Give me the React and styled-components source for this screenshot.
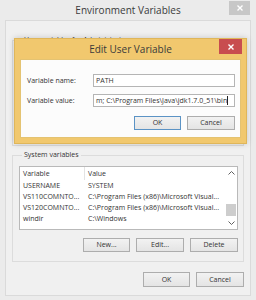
import React from 'react';
import styled, { createGlobalStyle } from 'styled-components';

const Global = createGlobalStyle`
  html, body {
    margin: 0;
    padding: 0;
    background: #ebebeb;
  }
  body {
    font-family: 'Open Sans', 'Noto Sans', sans-serif;
    color: #333;
  }
`;

const Window = styled.div`
  position: relative;
  width: 256px;
  height: 300px;
  box-sizing: border-box;
  background: #ebebeb;
  display: flex;
  flex-direction: column;
  overflow: hidden;
`;

const TitleBar = styled.div`
  display: grid;
  grid-template-columns: 1fr auto 1fr;
  align-items: start;
  height: 20px;
  flex-shrink: 0;
`;

const Title = styled.div`
  grid-column: 2;
  font-size: 10px;
  line-height: 21px;
  color: #3a3a3a;
  white-space: nowrap;
`;

const CloseButton = styled.div`
  grid-column: 3;
  justify-self: end;
  width: ${(p) => p.$w}px;
  height: ${(p) => p.$h}px;
  margin: ${(p) => p.$top}px ${(p) => p.$right}px 0 0;
  background: ${(p) => p.$bg};
  display: flex;
  align-items: center;
  justify-content: center;
`;

const Client = styled.div`
  flex: 1;
  margin: 0 5px 4px 5px;
  padding: 14px 6px 0 6px;
  background: #f0f0f0;
  border: 1px solid #dadada;
  display: flex;
  flex-direction: column;
`;

const Group = styled.fieldset`
  margin: ${(p) => p.$top}px 0 0 0;
  padding: 6px 5px 9px 6px;
  border: 1px solid #dcdcdc;
  min-width: 0;
  height: ${(p) => (p.$h ? `${p.$h}px` : 'auto')};
  box-sizing: border-box;
  display: flex;
  flex-direction: column;
`;

const Legend = styled.legend`
  font-size: 7px;
  line-height: 10px;
  padding: 0 2px;
  margin-left: 3px;
  color: #333;
`;

const ListBox = styled.div`
  height: 64px;
  box-sizing: border-box;
  border: 1px solid #b9b9b9;
  background: #fff;
  display: flex;
  overflow: hidden;
`;

const Table = styled.div`
  flex: 1;
  display: flex;
  flex-direction: column;
  min-width: 0;
`;

const Row = styled.div`
  display: grid;
  grid-template-columns: 65px 1fr;
  height: ${(p) => (p.$head ? 13 : 11)}px;
  line-height: ${(p) => (p.$head ? 13 : 11)}px;
  font-size: 7px;
  color: #333;
  flex-shrink: 0;
`;

const Cell = styled.div`
  padding-left: 3px;
  white-space: nowrap;
  overflow: hidden;
  border-right: ${(p) => (p.$divider ? '1px solid #e3e3e3' : 'none')};
`;

const ScrollBar = styled.div`
  width: 12px;
  display: flex;
  flex-direction: column;
  background: #fff;
`;

const Arrow = styled.div`
  height: 12px;
  display: flex;
  align-items: center;
  justify-content: center;
`;

const Track = styled.div`
  flex: 1;
  display: flex;
  flex-direction: column;
  justify-content: flex-end;
`;

const Thumb = styled.div`
  height: 12px;
  margin: 0 1px 1px 1px;
  background: #cdcdcd;
`;

const ButtonRow = styled.div`
  display: flex;
  justify-content: flex-end;
  gap: 6px;
  margin-top: ${(p) => p.$top}px;
  width: ${(p) => (p.$w ? `${p.$w}px` : 'auto')};
`;

const Button = styled.div`
  box-sizing: border-box;
  width: ${(p) => p.$w}px;
  height: ${(p) => p.$h}px;
  border: 1px solid ${(p) => (p.$default ? '#5b93c5' : '#adadad')};
  background: linear-gradient(#f2f2f2, #e4e4e4);
  font-size: 7px;
  line-height: ${(p) => p.$h - 2}px;
  text-align: center;
  color: #333;
`;

const Dialog = styled.div`
  position: absolute;
  left: 14px;
  top: 38px;
  width: 233px;
  height: 106px;
  box-sizing: border-box;
  background: #f1c86e;
  border: 1px solid #dfb65a;
  box-shadow: 0 0 6px rgba(0, 0, 0, 0.18);
  display: flex;
  flex-direction: column;
`;

const Panel = styled.div`
  flex: 1;
  margin: 0 5px 5px 5px;
  padding: 14px 6px 0 6px;
  background: #fcfcfc;
  border: 1px solid #e4c372;
`;

const Form = styled.div`
  display: grid;
  grid-template-columns: 66px 142px;
  row-gap: 7px;
  align-items: center;
`;

const Label = styled.div`
  font-size: 7px;
  color: #333;
  white-space: nowrap;
`;

const Field = styled.div`
  box-sizing: border-box;
  height: 13px;
  border: 1px solid #b5b5b5;
  background: #fff;
  font-size: 7px;
  line-height: 11px;
  padding: 0 2px;
  white-space: nowrap;
  overflow: hidden;
  color: #333;
`;

const Caret = styled.span`
  display: inline-block;
  width: 1px;
  height: 9px;
  background: #222;
  vertical-align: -2px;
`;

const Cross = () => (
  <svg width="6" height="6" viewBox="0 0 6 6">
    <path d="M0.5 0.5 L5.5 5.5 M5.5 0.5 L0.5 5.5" stroke="#fff" strokeWidth="1.4" />
  </svg>
);

const Chevron = ({ up }) => (
  <svg width="7" height="4" viewBox="0 0 7 4">
    <polyline
      points={up ? '0.5,3.5 3.5,0.5 6.5,3.5' : '0.5,0.5 3.5,3.5 6.5,0.5'}
      fill="none"
      stroke="#606060"
      strokeWidth="1"
    />
  </svg>
);

const systemVars = [
  ['USERNAME', 'SYSTEM'],
  ['VS110COMNTO...', 'C:\\Program Files (x86)\\Microsoft Visual...'],
  ['VS120COMNTO...', 'C:\\Program Files (x86)\\Microsoft Visual...'],
  ['windir', 'C:\\Windows'],
];

const App = () => (
  <>
    <Global />
    <Window>
      <TitleBar>
        <Title>Environment Variables</Title>
        <CloseButton $bg="#c7c7c7" $w={21} $h={14} $top={1} $right={6}>
          <Cross />
        </CloseButton>
      </TitleBar>
      <Client>
        <Group $top={0} $h={111}>
          <Legend>User variables for Administrator</Legend>
        </Group>
        <Group $top={4}>
          <Legend>System variables</Legend>
          <ListBox>
            <Table>
              <Row $head>
                <Cell $divider>Variable</Cell>
                <Cell>Value</Cell>
              </Row>
              {systemVars.map(([name, value]) => (
                <Row key={name}>
                  <Cell>{name}</Cell>
                  <Cell>{value}</Cell>
                </Row>
              ))}
            </Table>
            <ScrollBar>
              <Arrow>
                <Chevron up />
              </Arrow>
              <Track>
                <Thumb />
              </Track>
              <Arrow>
                <Chevron />
              </Arrow>
            </ScrollBar>
          </ListBox>
          <ButtonRow $top={8}>
            <Button $w={47} $h={14}>New...</Button>
            <Button $w={48} $h={14}>Edit...</Button>
            <Button $w={48} $h={14}>Delete</Button>
          </ButtonRow>
        </Group>
        <ButtonRow $top={10}>
          <Button $w={47} $h={15}>OK</Button>
          <Button $w={48} $h={15}>Cancel</Button>
        </ButtonRow>
      </Client>

      <Dialog>
        <TitleBar>
          <Title>Edit User Variable</Title>
          <CloseButton $bg="#c84d4f" $w={23} $h={15} $top={0} $right={4}>
            <Cross />
          </CloseButton>
        </TitleBar>
        <Panel>
          <Form>
            <Label>Variable name:</Label>
            <Field>PATH</Field>
            <Label>Variable value:</Label>
            <Field>
              m; C:\Program Files\Java\jdk1.7.0_51\bin
              <Caret />
            </Field>
          </Form>
          <ButtonRow $top={9} $w={208}>
            <Button $w={47} $h={14} $default>OK</Button>
            <Button $w={48} $h={14}>Cancel</Button>
          </ButtonRow>
        </Panel>
      </Dialog>
    </Window>
  </>
);

export default App;
